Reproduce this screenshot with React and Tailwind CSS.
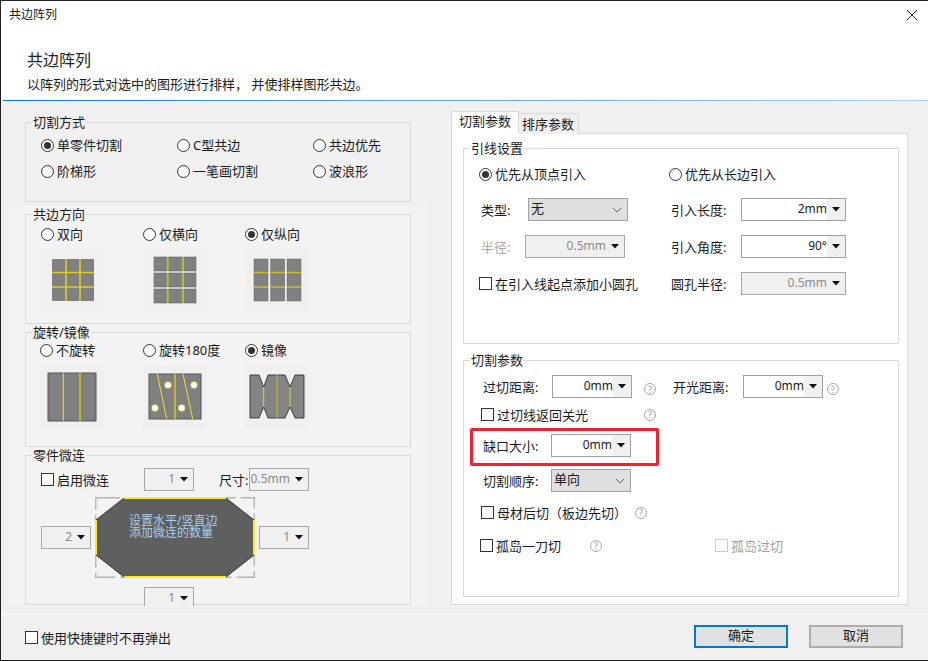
import React from "react";

const Radio = ({ on, label, className = "" }) => (
  <div className={`flex items-center h-[16px] text-[13px] leading-[16px] text-[#1a1a1a] ${className}`}>
    <span className="flex items-center justify-center w-[13px] h-[13px] rounded-full border border-[#333] bg-white mr-[3px] shrink-0">
      {on && <span className="block w-[7px] h-[7px] rounded-full bg-[#333]" />}
    </span>
    <span className="whitespace-nowrap">{label}</span>
  </div>
);

const Check = ({ label, disabled, className = "" }) => (
  <div className={`flex items-center h-[16px] text-[13px] leading-[16px] ${disabled ? "text-[#a0a0a0]" : "text-[#1a1a1a]"} ${className}`}>
    <span className={`block w-[13px] h-[13px] border bg-white mr-[3px] shrink-0 ${disabled ? "border-[#cccccc]" : "border-[#333]"}`} />
    <span className="whitespace-nowrap">{label}</span>
  </div>
);

const Arrow = () => (
  <svg width="8" height="5" viewBox="0 0 8 5" className="shrink-0">
    <path d="M0 0H8L4 4.5Z" fill="#111" />
  </svg>
);

const Combo = ({ value, disabled, className = "" }) => (
  <div className={`flex items-stretch h-[23px] border shrink-0 text-[12px] leading-[19px] overflow-hidden ${disabled ? "bg-[#f0f0f0] border-[#a8a8a8] text-[#8a8a8a]" : "bg-white border-[#a0a0a0] text-[#1a1a1a]"} ${className}`}>
    <span className="flex-1 text-right whitespace-nowrap">{value}</span>
    <span className={`flex items-center justify-center w-[18px] shrink-0 ${disabled ? "" : "bg-[#f0f0f0]"}`}>
      <Arrow />
    </span>
  </div>
);

const Select = ({ value, className = "" }) => (
  <div className={`flex items-center justify-between h-[23px] bg-[#dfdfdf] border border-[#a0a0a0] pl-[2px] pr-[5px] shrink-0 text-[13px] text-[#1a1a1a] ${className}`}>
    <span className="leading-[18px] -mt-[4px]">{value}</span>
    <svg width="10" height="6" viewBox="0 0 10 6" className="shrink-0">
      <path d="M1 1L5 5L9 1" fill="none" stroke="#666" strokeWidth="1" />
    </svg>
  </div>
);

const Help = ({ className = "" }) => (
  <span className={`flex items-center justify-center w-[12px] h-[12px] rounded-full border border-[#a8a8a8] text-[9px] leading-none text-[#999] shrink-0 ${className}`}>?</span>
);

const Group = ({ title, className = "", children }) => (
  <div className={`relative border border-[#d9d9d9] ${className}`}>
    <span className="absolute left-[6px] -top-[8px] h-[14px] px-px text-[13px] leading-[14px] text-[#1a1a1a] bg-inherit whitespace-nowrap">{title}</span>
    {children}
  </div>
);

const Thumb = ({ children, className = "" }) => (
  <svg width="64" height="64" viewBox="0 0 64 64" className={`block bg-[#f0f0f0] ${className}`}>{children}</svg>
);

const G = "#808080";
const Y = "#dccd2a";

const Both = () => (
  <Thumb>
    <rect x="11" y="11" width="42" height="42" rx="1" fill={G} />
    <path d="M25 11V53M39 11V53M11 24.5H53M11 39H53" stroke={Y} strokeWidth="1.6" />
  </Thumb>
);
const Horizontal = () => (
  <Thumb>
    {[9, 25, 41].map((y) => (
      <rect key={y} x="11" y={y} width="42" height="14" fill={G} stroke="#555" strokeWidth="0.5" />
    ))}
    <path d="M24.7 9V23M24.7 25V39M24.7 41V55M40 9V23M40 25V39M40 41V55" stroke="#cbbd2e" strokeWidth="1.8" />
  </Thumb>
);
const Vertical = () => (
  <Thumb>
    {[9, 25.7, 42].map((x) => (
      <rect key={x} x={x} y="11" width="14" height="42" fill={G} stroke="#666" strokeWidth="0.5" />
    ))}
    <path d="M9 24.5H23M25.7 24.5H39.7M42 24.5H56M9 39H23M25.7 39H39.7M42 39H56" stroke="#cbbd2e" strokeWidth="1.6" />
  </Thumb>
);
const NoRotate = () => (
  <Thumb>
    <rect x="8" y="8" width="48" height="48" fill={G} stroke="#555" />
    <path d="M23.3 8V56" stroke="#f2e12e" strokeWidth="1" />
    <path d="M40 8V56" stroke="#c9b92f" strokeWidth="1.8" />
  </Thumb>
);
const Rotate = () => (
  <Thumb>
    <rect x="6" y="9" width="52" height="45" fill={G} stroke="#555" />
    <path d="M14.3 9L23.7 54M40 9L49.7 54" stroke="#f2e12e" strokeWidth="1" />
    <path d="M32 9V54" stroke="#c9b92f" strokeWidth="1.8" />
    {[[25, 20], [51, 20], [12, 43], [38.7, 43]].map(([x, y]) => (
      <circle key={x} cx={x} cy={y} r="3.2" fill="#fff" stroke="#f5e84a" strokeWidth="0.7" />
    ))}
  </Thumb>
);
const Mirror = () => (
  <Thumb>
    <path d="M5 10H14L18.7 22L23 10H40L45 22L50 10H59V53H50L45 42L40 53H23L18.7 42L14 53H5Z" fill="#848484" stroke="#222" strokeWidth="0.8" />
    <path d="M18.7 22V42M45 22V42" stroke="#e3d42c" strokeWidth="1" />
    <path d="M32 10V53" stroke="#aca052" strokeWidth="1.8" />
  </Thumb>
);

const Octagon = () => (
  <svg width="160" height="81" viewBox="0 0 160 81" className="block">
    <rect x="0.75" y="0.75" width="158.5" height="79.5" fill="none" stroke="#b4b4b4" strokeWidth="1.4" strokeDasharray="24 5" />
    <path d="M29 1H131L159 23V58L131 80H29L1 58V23Z" fill="#5e5f5f" stroke="#1a1a1a" strokeWidth="0.8" />
    <path d="M29 1H131M29 80H131M1 23V58M159 23V58" stroke="#fbe928" strokeWidth="2" />
  </svg>
);

const Close = () => (
  <svg width="12" height="12" viewBox="0 0 12 12">
    <path d="M1 1L11 11M11 1L1 11" stroke="#222" strokeWidth="1" />
  </svg>
);

const Lbl = ({ children, className = "" }) => (
  <span className={`text-[13px] leading-[16px] text-[#1a1a1a] whitespace-nowrap shrink-0 ${className}`}>{children}</span>
);

export default function App() {
  return (
    <div className="w-[928px] h-[661px] flex flex-col bg-[#f0f0f0] overflow-hidden border-t border-l border-b border-[#222] font-['Noto_Sans','Noto_Sans_CJK_SC',sans-serif]">
      <div className="h-[99px] shrink-0 bg-white flex flex-col">
        <div className="flex items-center justify-between h-[28px] pl-[8px] pr-[10px] shrink-0">
          <span className="text-[12px] leading-[16px] text-[#1a1a1a]">共边阵列</span>
          <Close />
        </div>
        <div className="pl-[26px] pt-[19px] text-[16px] leading-[24px] text-[#222]">共边阵列</div>
        <div className="pl-[26px] pt-[3px] text-[13px] leading-[18px] text-[#1a1a1a]">以阵列的形式对选中的图形进行排样， 并使排样图形共边。</div>
      </div>
      <div className="h-[1px] ml-[2px] shrink-0 bg-gradient-to-r from-[#0078d7] to-[#a8d4f5]" />
      <div className="flex h-[513px] shrink-0">
        <div className="w-[427px] shrink-0 h-[505px] overflow-hidden">
          <div className="pl-[24px] pt-[21px]">
            <Group title="切割方式" className="w-[386px] h-[80px] bg-[#f0f0f0] pl-[15px] pt-[14px]">
              <div className="grid grid-cols-[136px_136px_100px] gap-y-[10px]">
                <Radio on label="单零件切割" />
                <Radio label="C型共边" />
                <Radio label="共边优先" />
                <Radio label="阶梯形" />
                <Radio label="一笔画切割" />
                <Radio label="波浪形" />
              </div>
            </Group>
          </div>
          <div className="mt-[4px] ml-[7px] w-[420px] h-[400px] bg-[#f3f3f3] pl-[17px] pt-[8px] overflow-hidden">
            <Group title="共边方向" className="w-[386px] h-[110px] bg-[#f3f3f3] pl-[15px] pt-[11px]">
              <div className="grid grid-cols-[102px_102px_102px]">
                <Radio label="双向" />
                <Radio label="仅横向" />
                <Radio on label="仅纵向" />
                <div className="pt-[6px]"><Both /></div>
                <div className="pt-[6px]"><Horizontal /></div>
                <div className="pt-[6px]"><Vertical /></div>
              </div>
            </Group>
            <Group title="旋转/镜像" className="mt-[8px] w-[386px] h-[115px] bg-[#f3f3f3] pl-[14px] pt-[9px]">
              <div className="grid grid-cols-[103px_102px_102px]">
                <Radio label="不旋转" />
                <Radio label="旋转180度" />
                <Radio on label="镜像" />
                <div className="pt-[7px]"><NoRotate /></div>
                <div className="pt-[7px]"><Rotate /></div>
                <div className="pt-[7px]"><Mirror /></div>
              </div>
            </Group>
            <Group title="零件微连" className="mt-[8px] w-[386px] h-[150px] bg-[#f3f3f3] pl-[15px] pt-[12px]">
              <div className="flex items-center">
                <Check label="启用微连" className="w-[103px]" />
                <Combo value="1" disabled className="w-[50px]" />
                <Lbl className="ml-[25px] w-[30px]">尺寸:</Lbl>
                <Combo value="0.5mm" disabled className="w-[60px]" />
              </div>
              <div className="flex items-center mt-[6px] h-[81px]">
                <Combo value="2" disabled className="w-[50px]" />
                <div className="relative ml-[4px] w-[160px] h-[81px] shrink-0">
                  <Octagon />
                  <div className="absolute left-[34px] top-[18px] text-[12px] leading-[12px] text-[#a9cdf0] whitespace-nowrap">
                    <div>设置水平/竖直边</div>
                    <div>添加微连的数量</div>
                  </div>
                </div>
                <Combo value="1" disabled className="ml-[4px] w-[50px]" />
              </div>
              <div className="pl-[103px] mt-[9px]">
                <Combo value="1" disabled className="w-[50px]" />
              </div>
            </Group>
          </div>
        </div>
        <div className="pl-[23px] pt-[10px] flex-1">
          <div className="flex items-end h-[23px] relative z-10">
            <div className="w-[68px] h-[23px] bg-white border border-b-0 border-[#d9d9d9] pl-[7px] pt-[1px] text-[13px] leading-[16px] text-[#1a1a1a]">切割参数</div>
            <div className="w-[60px] h-[21px] bg-[#f0f0f0] border border-b-0 border-l-0 border-[#d9d9d9] pl-[3px] pt-[1px] text-[13px] leading-[18px] text-[#1a1a1a]">排序参数</div>
          </div>
          <div className="w-[457px] h-[472px] -mt-px bg-white border border-[#d9d9d9] pl-[11px] pt-[14px]">
            <Group title="引线设置" className="w-[436px] h-[196px] bg-white pl-[15px] pt-[17px]">
              <div className="flex h-[16px]">
                <Radio on label="优先从顶点引入" className="w-[190px]" />
                <Radio label="优先从长边引入" />
              </div>
              <div className="flex items-center mt-[16px] h-[23px]">
                <Lbl className="ml-[2px] w-[47px]">类型:</Lbl>
                <Select value="无" className="w-[100px]" />
                <Lbl className="ml-[43px] w-[70px]">引入长度:</Lbl>
                <Combo value="2mm" className="w-[105px]" />
              </div>
              <div className="flex items-center mt-[14px] h-[23px]">
                <Lbl className="ml-[2px] w-[44px] !text-[#a8a8a8]">半径:</Lbl>
                <Combo value="0.5mm" disabled className="w-[100px]" />
                <Lbl className="ml-[46px] w-[70px]">引入角度:</Lbl>
                <Combo value="90°" className="w-[105px]" />
              </div>
              <div className="flex items-center mt-[14px] h-[23px]">
                <Check label="在引入线起点添加小圆孔" className="w-[192px]" />
                <Lbl className="w-[70px]">圆孔半径:</Lbl>
                <Combo value="0.5mm" disabled className="w-[105px]" />
              </div>
            </Group>
            <Group title="切割参数" className="mt-[16px] w-[436px] h-[237px] bg-white pl-[19px] pt-[14px]">
              <div className="flex items-center h-[23px]">
                <Lbl className="w-[69px]">过切距离:</Lbl>
                <Combo value="0mm" className="w-[80px]" />
                <Help className="ml-[12px] mt-[5px]" />
                <Lbl className="ml-[17px] w-[70px]">开光距离:</Lbl>
                <Combo value="0mm" className="w-[80px]" />
                <Help className="ml-[4px] mt-[5px]" />
              </div>
              <div className="flex items-center mt-[5px] h-[23px] -ml-[2px]">
                <Check label="过切线返回关光" className="w-[163px]" />
                <Help />
              </div>
              <div className="relative flex items-center mt-[8px] h-[23px]">
                <Lbl className="w-[68px]">缺口大小:</Lbl>
                <Combo value="0mm" className="w-[80px]" />
                <div className="absolute -left-[13px] -top-[6px] w-[189px] h-[38px] border-[3px] border-[#ee2233] rounded-[2px]" />
              </div>
              <div className="flex items-center mt-[12px] h-[23px]">
                <Lbl className="w-[68px]">切割顺序:</Lbl>
                <Select value="单向" className="w-[80px]" />
              </div>
              <div className="flex items-center mt-[9px] h-[23px] -ml-[2px]">
                <Check label="母材后切（板边先切）" className="w-[154px]" />
                <Help />
              </div>
              <div className="flex items-center mt-[10px] h-[23px] -ml-[3px]">
                <Check label="孤岛一刀切" className="w-[110px]" />
                <Help />
                <Check label="孤岛过切" disabled className="ml-[113px]" />
              </div>
            </Group>
          </div>
        </div>
      </div>
      <div className="flex-1 border-t border-[#fbfbfb] flex items-center pl-[24px] pr-[25px]">
        <Check label="使用快捷键时不再弹出" />
        <div className="ml-auto flex gap-[21px] -mt-[3px]">
          <div className="flex items-center justify-center w-[94px] h-[23px] border-2 border-[#0078d7] bg-[#e1e1e1] text-[13px] text-[#1a1a1a]">确定</div>
          <div className="flex items-center justify-center w-[94px] h-[23px] border-2 border-[#adadad] bg-[#e1e1e1] text-[13px] text-[#1a1a1a]">取消</div>
        </div>
      </div>
    </div>
  );
}
